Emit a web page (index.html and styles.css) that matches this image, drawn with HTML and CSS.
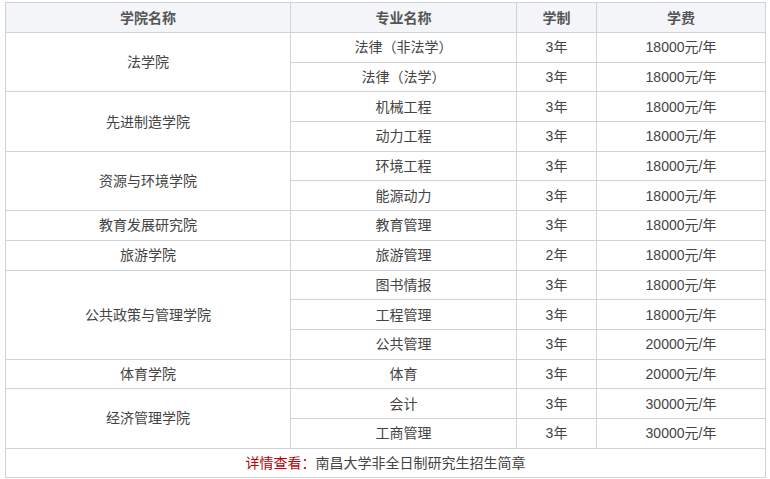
FILE: index.html
```html
<!DOCTYPE html>
<html lang="zh-CN">
<head>
<meta charset="utf-8">
<link rel="stylesheet" href="styles.css">
</head>
<body>
<table class="fees">
  <colgroup>
    <col class="c1"><col class="c2"><col class="c3"><col class="c4">
  </colgroup>
  <thead>
    <tr><th>学院名称</th><th>专业名称</th><th>学制</th><th>学费</th></tr>
  </thead>
  <tbody>
    <tr><td rowspan="2">法学院</td><td>法律（非法学）</td><td>3年</td><td>18000元/年</td></tr>
    <tr><td>法律（法学）</td><td>3年</td><td>18000元/年</td></tr>
    <tr><td rowspan="2">先进制造学院</td><td>机械工程</td><td>3年</td><td>18000元/年</td></tr>
    <tr><td>动力工程</td><td>3年</td><td>18000元/年</td></tr>
    <tr><td rowspan="2">资源与环境学院</td><td>环境工程</td><td>3年</td><td>18000元/年</td></tr>
    <tr><td>能源动力</td><td>3年</td><td>18000元/年</td></tr>
    <tr><td>教育发展研究院</td><td>教育管理</td><td>3年</td><td>18000元/年</td></tr>
    <tr><td>旅游学院</td><td>旅游管理</td><td>2年</td><td>18000元/年</td></tr>
    <tr><td rowspan="3">公共政策与管理学院</td><td>图书情报</td><td>3年</td><td>18000元/年</td></tr>
    <tr><td>工程管理</td><td>3年</td><td>18000元/年</td></tr>
    <tr><td>公共管理</td><td>3年</td><td>20000元/年</td></tr>
    <tr><td>体育学院</td><td>体育</td><td>3年</td><td>20000元/年</td></tr>
    <tr><td rowspan="2">经济管理学院</td><td>会计</td><td>3年</td><td>30000元/年</td></tr>
    <tr><td>工商管理</td><td>3年</td><td>30000元/年</td></tr>
    <tr><td colspan="4"><span class="hl">详情查看：</span>南昌大学非全日制研究生招生简章</td></tr>
  </tbody>
</table>
</body>
</html>
```

FILE: styles.css
```css
html, body {
  margin: 0;
  padding: 0;
  background: #ffffff;
}
body {
  padding: 2px 5px 0 5px;
  font-family: "Liberation Sans", Arial, "Noto Sans CJK SC", sans-serif;
  font-size: 14px;
  color: #444444;
}
.fees {
  width: 760px;
  border-collapse: collapse;
  table-layout: fixed;
}
.c1 { width: 285px; }
.c2 { width: 226px; }
.c3 { width: 80px; }
.c4 { width: 169px; }
.fees th,
.fees td {
  border: 1px solid #cfd3d8;
  text-align: center;
  vertical-align: middle;
  height: 28.69px;
  padding: 0;
  line-height: 18px;
}
.fees th {
  background: #f3f5f8;
  font-weight: bold;
  color: #555555;
  height: 29px;
}
.hl {
  color: #c00000;
}
```
